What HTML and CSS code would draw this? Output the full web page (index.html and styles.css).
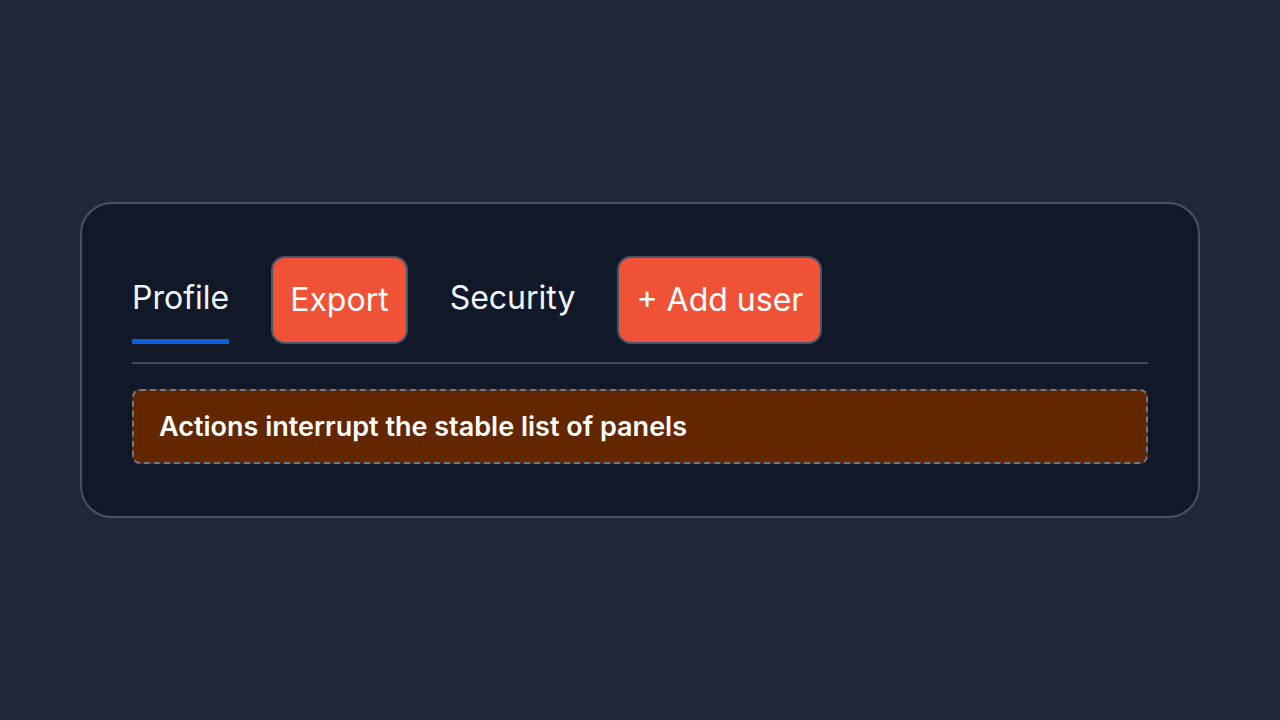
FILE: index.html
```html
<!DOCTYPE html>
<html lang="en">
<head>
<meta charset="utf-8">
<title>Tabs</title>
<link rel="stylesheet" href="styles.css">
</head>
<body>
<main class="card">
  <nav class="tabs">
    <div class="tab tab-active">Profile</div>
    <button class="action">Export</button>
    <div class="tab">Security</div>
    <button class="action">+ Add user</button>
  </nav>
  <div class="divider"></div>
  <div class="notice">Actions interrupt the stable list of panels</div>
</main>
</body>
</html>
```

FILE: styles.css
```css
* { box-sizing: border-box; }
html, body { margin: 0; height: 100%; }
body {
  background: #222839;
  display: flex;
  align-items: center;
  justify-content: center;
  font-family: "Inter", "Liberation Sans", sans-serif;
  color: #f8fafc;
}
.card {
  width: 1120px;
  background: #111827;
  border: 2px solid #465366;
  border-radius: 32px;
  padding: 52px 50px 52px 50px;
}
.tabs {
  display: flex;
  align-items: flex-end;
  gap: 42px;
}
.tab {
  font-size: 32px;
  line-height: 40px;
  padding-bottom: 21px;
  border-bottom: 5px solid transparent;
  color: #f1f5f9;
}
.tab-active {
  border-bottom-color: #0b5fd9;
}
.action {
  font-family: inherit;
  font-size: 32px;
  line-height: 48px;
  color: #fff;
  background: #f05237;
  border: 2px solid #475569;
  border-radius: 14px;
  padding: 18px 17px;
}
.divider {
  height: 2px;
  background: #3f4a5c;
  margin-top: 18px;
}
.notice {
  margin-top: 25px;
  background: #632700;
  border: 2px dashed #6b7789;
  border-radius: 8px;
  padding: 0 25px;
  height: 75px;
  display: flex;
  align-items: center;
  font-size: 27px;
  font-weight: 600;
  color: #fff;
}
```
